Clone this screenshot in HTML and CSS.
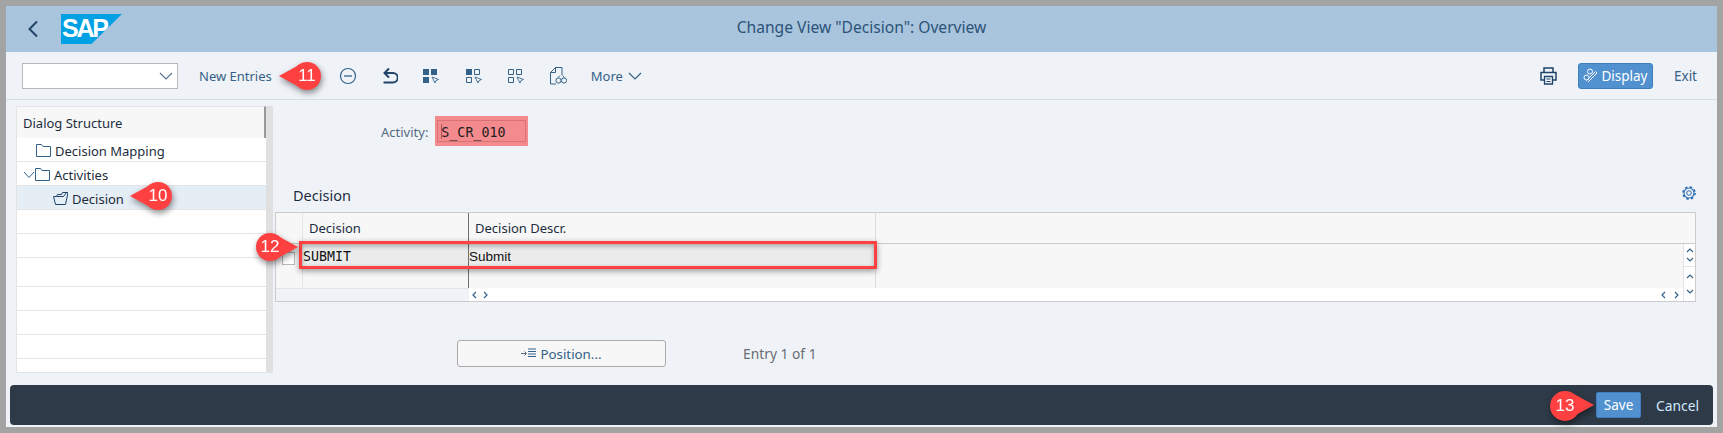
FILE: index.html
```html
<!DOCTYPE html>
<html lang="en">
<head>
    <meta charset="UTF-8" />
    <title>Change View "Decision": Overview</title>
    <link rel="stylesheet" href="styles.css">
</head>
<body>
<div class="window">
    <header class="shell">
        <svg class="back" width="12" height="18" viewBox="0 0 12 18"><path d="M10 1.5 2.500 9l7.500 7.500" fill="none" stroke="#1f4468" stroke-width="2"/></svg>
        <div class="logo"><span>SAP</span></div>
        <h1>Change View "Decision": Overview</h1>
    </header>

    <div class="toolbar">
        <div class="combo">
            <svg width="14" height="8" viewBox="0 0 14 8"><path d="M1 1l6 6 6-6" fill="none" stroke="#5b7690" stroke-width="1.200"/></svg>
        </div>
        <a class="tool new-entries">New Entries</a>
        <svg class="icon minus" width="18" height="18" viewBox="0 0 18 18"><circle cx="9" cy="9" r="7.500" fill="none" stroke="#346187" stroke-width="1.200"/><path d="M5 9h8" stroke="#346187" stroke-width="1.300"/></svg>
        <svg class="icon undo" width="16" height="17" viewBox="0 0 16 17"><path d="M7 1.500 2.500 6 7 10.500M2.500 6H11a4 4 0 0 1 0 9.500H1.500" fill="none" stroke="#1f4468" stroke-width="2"/></svg>
        <svg class="icon sel1" width="17" height="16" viewBox="0 0 17 16"><path d="M0 1h6v6H0zM8 1h6v6H8zM0 9h6v6H0z" fill="#346187"/><path d="M9 9l6.500 2.500-2.500 1-1 2.500z" fill="#fff" stroke="#346187" stroke-width=".9"/></svg>
        <svg class="icon sel2" width="17" height="16" viewBox="0 0 17 16"><path d="M0 1h6v6H0z" fill="#346187"/><path d="M8.500 1.500h5v5h-5zM.5 9.500h5v5h-5z" fill="none" stroke="#346187"/><path d="M9 9l6.500 2.500-2.500 1-1 2.500z" fill="#fff" stroke="#346187" stroke-width=".9"/></svg>
        <svg class="icon sel3" width="17" height="16" viewBox="0 0 17 16"><path d="M.5 1.500h5v5h-5zM8.500 1.500h5v5h-5zM.5 9.500h5v5h-5z" fill="none" stroke="#346187"/><path d="M9 9l6.500 2.500-2.500 1-1 2.500z" fill="#fff" stroke="#346187" stroke-width=".9"/></svg>
        <svg class="icon glasses" width="17" height="18" viewBox="0 0 17 18"><path d="M5.500.5H12V8M5.500.5.500 5.500V17H6M5.500.5v5h-5" fill="none" stroke="#346187"/><circle cx="8.500" cy="13.500" r="2.600" fill="none" stroke="#346187"/><circle cx="14" cy="13.500" r="2.600" fill="none" stroke="#346187"/><path d="M8 10.500l2-2M14.500 10.500l-2-2" stroke="#346187"/></svg>
        <a class="tool more">More</a>
        <svg class="more-arrow" width="14" height="8" viewBox="0 0 14 8"><path d="M1 1l6 6 6-6" fill="none" stroke="#346187" stroke-width="1.200"/></svg>

        <svg class="icon print" width="17" height="18" viewBox="0 0 17 18"><path d="M4 5V1h9v4M4 13H1V5.500h15V13h-3" fill="none" stroke="#1f4468" stroke-width="1.500"/><path d="M4.500 9.500h8V17h-8z" fill="#eff3f8" stroke="#1f4468" stroke-width="1.300"/><path d="M6.500 12h4M6.500 14.500h4" stroke="#1f4468"/></svg>
        <button class="btn-display">
            <svg width="15" height="15" viewBox="0 0 15 15"><circle cx="3.500" cy="9.500" r="2.500" fill="none" stroke="#fff"/><circle cx="7" cy="3.500" r="2.500" fill="none" stroke="#fff"/><path d="M5 14l9-9-1.500-1.500-9 9" fill="none" stroke="#fff"/></svg>
            Display
        </button>
        <a class="tool exit">Exit</a>
    </div>

    <div class="main">
        <aside class="tree">
            <div class="tree-list">
                <div class="tree-head">Dialog Structure</div>
                <div class="tree-row indent1">
                    <svg class="folder" width="15" height="13" viewBox="0 0 15 13"><path d="M.5 12.500V.5h5L7 2.500h7.500v10z" fill="#fff" stroke="#346187"/></svg>
                    Decision Mapping
                </div>
                <div class="tree-row">
                    <svg class="expander" width="12" height="8" viewBox="0 0 12 8"><path d="M1 1l5 5.500L11 1" fill="none" stroke="#346187"/></svg>
                    <svg class="folder" width="15" height="13" viewBox="0 0 15 13"><path d="M.5 12.500V.5h5L7 2.500h7.500v10z" fill="#fff" stroke="#346187"/></svg>
                    Activities
                </div>
                <div class="tree-row selected indent2">
                    <svg class="folder" width="15" height="13" viewBox="0 0 15 13"><path d="M2.500 12.500.5 4.500h3l1-2h4l1-2h5.500l-2.500 12zM3.500 4.500h7l3-4" fill="none" stroke="#1f4468"/></svg>
                    Decision
                </div>
                <div class="tree-row"></div>
                <div class="tree-row"></div>
                <div class="tree-row tall"></div>
                <div class="tree-row"></div>
                <div class="tree-row"></div>
                <div class="tree-row"></div>
                <div class="tree-row last"></div>
            </div>
            <div class="tree-scroll"></div>
        </aside>

        <section class="content">
            <div class="field">
                <label>Activity:</label>
                <div class="input-wrap"><div class="input">S_CR_010</div></div>
            </div>

            <div class="section-head">
                <h2>Decision</h2>
                <svg class="gear" width="14" height="14" viewBox="0 0 14 14"><circle cx="7" cy="7" r="5" fill="none" stroke="#2a6bb0" stroke-width="1.100"/><circle cx="7" cy="7" r="6" fill="none" stroke="#2a6bb0" stroke-width="1.600" stroke-dasharray="2.400 2.310"/><circle cx="7" cy="7" r="2.300" fill="none" stroke="#2a6bb0"/></svg>
            </div>

            <div class="table">
                <div class="t-row t-head">
                    <div class="c-sel"></div>
                    <div class="c-dec">Decision</div>
                    <div class="c-desc">Decision Descr.</div>
                    <div class="c-rest"></div>
                </div>
                <div class="t-body">
                    <div class="t-rows">
                        <div class="t-row t-data">
                            <div class="c-sel"><span class="check"></span></div>
                            <div class="c-dec mono">SUBMIT</div>
                            <div class="c-desc">Submit</div>
                            <div class="c-rest"></div>
                        </div>
                        <div class="t-row t-blank">
                            <div class="c-sel"></div>
                            <div class="c-dec"></div>
                            <div class="c-desc"></div>
                            <div class="c-rest"></div>
                        </div>
                        <div class="t-hscroll">
                            <div class="hs-fixed"></div>
                            <div class="hs-arrows">
                                <svg width="20" height="8" viewBox="0 0 20 8"><path d="M5 1 2 4l3 3M13 1l3 3-3 3" fill="none" stroke="#346187" stroke-width="1.200"/></svg>
                            </div>
                            <div class="hs-track"></div>
                            <div class="hs-arrows end">
                                <svg width="20" height="8" viewBox="0 0 20 8"><path d="M5 1 2 4l3 3M15 1l3 3-3 3" fill="none" stroke="#346187" stroke-width="1.200"/></svg>
                            </div>
                        </div>
                    </div>
                    <div class="t-vscroll">
                        <div class="vs-part">
                            <svg width="8" height="16" viewBox="0 0 8 16"><path d="M1 5l3-3 3 3M1 11l3 3 3-3" fill="none" stroke="#346187" stroke-width="1.200"/></svg>
                        </div>
                        <div class="vs-part low">
                            <svg width="8" height="22" viewBox="0 0 8 22"><path d="M1 5l3-3 3 3M1 17l3 3 3-3" fill="none" stroke="#346187" stroke-width="1.200"/></svg>
                        </div>
                    </div>
                </div>
            </div>

            <div class="pager">
                <button class="btn-position">
                    <svg width="15" height="11" viewBox="0 0 15 11"><path d="M0 5.500h5M3.500 3.500l2 2-2 2" fill="none" stroke="#556b82"/><path d="M7 1h8M7 3.500h8M7 6h8M7 8.500h8" stroke="#346187"/></svg>
                    Position...
                </button>
                <span class="entry">Entry 1 of 1</span>
            </div>
        </section>
    </div>

    <footer class="footer">
        <button class="btn-save">Save</button>
        <a class="cancel">Cancel</a>
    </footer>
</div>

<!-- annotations drawn over the screen -->
<div class="mark-box"></div>
<div class="callout c10"><span>10</span></div>
<div class="callout c11"><span>11</span></div>
<div class="callout c12 right"><span>12</span></div>
<div class="callout c13 right big"><span>13</span></div>
</body>
</html>
```

FILE: styles.css
```css
* {margin:0; padding:0; box-sizing: border-box;}
html, body {height: 100%;}
body {
    background-color: #a3a3a3;
    padding: 6px;
    position: relative;
    overflow: hidden;
    font-family: "Noto Sans", "Liberation Sans", sans-serif;
    font-size: 13px;
    color: #1d2d3e;
}
a {cursor: pointer;}
button {font-family: inherit; cursor: pointer;}
.window {
    height: 421px;
    background-color: #eff3f8;
    display: flex;
    flex-direction: column;
}

/* shell */
.shell {
    height: 46px;
    flex: none;
    background-color: #a9c4dd;
    display: flex;
    align-items: center;
    padding-left: 21px;
    position: relative;
}
.logo {
    width: 61px;
    height: 30px;
    margin-left: 22px;
    background-color: #00a1e4;
    clip-path: polygon(0 0, 100% 0, 50% 100%, 0 100%);
}
.logo span {
    display: block;
    padding-left: 1px;
    font: bold 25px/29px "Liberation Sans", sans-serif;
    letter-spacing: -2.200px;
    color: #fff;
}
.shell h1 {
    position: absolute;
    left: 0;
    right: 0;
    top: 11px;
    text-align: center;
    font-size: 15.600px;
    line-height: 20px;
    font-weight: 400;
    color: #2c5378;
}

/* toolbar */
.toolbar {
    height: 48px;
    flex: none;
    border-bottom: 1px solid #d5dfea;
    display: flex;
    align-items: center;
    padding-left: 16px;
}
.combo {
    width: 156px;
    height: 26px;
    background-color: #fff;
    border: 1px solid #b8b8b8;
    display: flex;
    align-items: center;
    justify-content: flex-end;
    padding-right: 4px;
}
.tool {color: #346187; font-size: 13px;}
.new-entries {margin-left: 21px;}
.icon {flex: none;}
.minus {margin-left: 67px;}
.undo {margin-left: 25px;}
.sel1 {margin-left: 25px;}
.sel2 {margin-left: 26px;}
.sel3 {margin-left: 25px;}
.glasses {margin-left: 25px;}
.more {margin-left: 24px;}
.more-arrow {margin-left: 5px;}
.print {margin-left: auto;}
.btn-display {
    width: 75px;
    height: 26px;
    margin-left: 21px;
    background-color: #5191cf;
    border: 1px solid #3f7fbf;
    border-radius: 3px;
    color: #fff;
    font-size: 13.500px;
    display: flex;
    align-items: center;
    justify-content: center;
    gap: 3px;
}
.exit {margin-left: 21px; margin-right: 20px; font-size: 13.500px;}

/* main */
.main {
    flex: 1;
    display: flex;
    min-height: 0;
}
.tree {
    width: 257px;
    height: 267px;
    flex: none;
    margin: 6px 0 0 10px;
    display: flex;
}
.tree-list {
    flex: 1;
    background-color: #fff;
    border-left: 1px solid #e4e4e4;
    border-bottom: 1px solid #e4e4e4;
}
.tree-scroll {width: 7px; background-color: #e0e0e0;}
.tree-head {
    height: 32px;
    background-color: #f7f7f7;
    border-top: 1px solid #e4e4e4;
    border-right: 2px solid #999;
    padding-left: 6px;
    line-height: 33px;
    font-size: 13px;
}
.tree-row {
    height: 24px;
    border-bottom: 1px solid #e4e4e4;
    display: flex;
    align-items: center;
    gap: 4px;
    padding: 2px 0 0 6px;
    font-size: 13px;
}
.tree-row.tall {height: 29px;}
.tree-row.last {height: 13px; border-bottom: 0;}
.indent1 {padding-left: 19px;}
.indent2 {padding-left: 36px;}
.expander {margin-right: -4px;}
.selected {background-color: #e5edf5;}

/* right part */
.content {
    flex: 1;
    min-width: 0;
    padding: 16px 21px 0 2px;
}
.field {
    height: 30px;
    display: flex;
    align-items: center;
    padding-left: 106px;
}
.field label {color: #556b82; font-size: 13px; margin-right: 7px; padding-top: 2px;}
.input-wrap {
    width: 93px;
    height: 30px;
    padding: 4px 2px;
    background-color: #f38a8d;
}
.input {
    height: 22px;
    border: 1px solid #d87274;
    padding-left: 3px;
    font: 13.300px/24px "DejaVu Sans Mono", monospace;
    color: #1d1d1d;
}
.input::before {
    content: "";
    display: inline-block;
    width: 1px;
    height: 15px;
    margin-right: -1px;
    vertical-align: -2px;
    background-color: #a85a5c;
}
.section-head {
    height: 36px;
    margin-top: 30px;
    padding: 0 0 0 18px;
    display: flex;
    align-items: center;
    justify-content: space-between;
}
.section-head h2 {font-size: 14.500px; font-weight: 400; padding-top: 2px;}
.gear {margin-bottom: 2px;}

/* table */
.table {
    height: 90px;
    border: 1px solid #ccc;
    background-color: #f7f7f7;
}
.t-row {display: flex;}
.t-head {height: 31px; border-bottom: 1px solid #ccc;}
.c-sel {width: 27px; flex: none; border-right: 1px solid #e4e4e4;}
.c-dec {width: 166px; flex: none; border-right: 1px solid #6f6f6f;}
.c-desc {width: 407px; flex: none; border-right: 1px solid #dcdcdc;}
.c-rest {flex: 1;}
.t-head .c-dec, .t-head .c-desc {padding-left: 6px; line-height: 30px; font-size: 13px;}
.t-body {display: flex; height: 57px;}
.t-rows {flex: 1; min-width: 0; display: flex; flex-direction: column;}
.t-data {height: 22px; align-items: stretch;}
.t-data .c-dec, .t-data .c-desc {background-color: #ebebeb; padding-top: 2px;}
.t-data .c-desc {font: 13.500px/22px "Liberation Sans", sans-serif; color: #111; border-right-color: #ebebeb;}
.t-data .c-sel {display: flex; align-items: flex-end; padding-left: 6px;}
.check {
    width: 13px;
    height: 13px;
    border: 1px solid #b8b8b8;
    background-color: #fff;
    display: block;
    margin-bottom: 1px;
}
.mono {font: 13.300px/22px "DejaVu Sans Mono", monospace; color: #111;}
.t-blank {height: 22px;}
.t-hscroll {
    height: 13px;
    display: flex;
    background-color: #fff;
}
.hs-fixed {width: 193px; background-color: #eff3f8; border-top: 1px solid #e4e4e4;}
.hs-arrows {width: 24px; display: flex; align-items: center; justify-content: center;}
.hs-arrows.end {width: 26px;}
.hs-track {flex: 1;}
.t-vscroll {
    width: 12px;
    flex: none;
    border-left: 1px solid #e4e4e4;
    background-color: #fff;
    display: flex;
    flex-direction: column;
}
.vs-part {height: 23px; display: flex; align-items: center; justify-content: center; border-bottom: 1px solid #e4e4e4;}
.vs-part.low {flex: 1; border-bottom: 0;}

.pager {
    display: flex;
    align-items: center;
    margin-top: 38px;
    padding-left: 182px;
}
.btn-position {
    width: 209px;
    height: 27px;
    background-color: #f7f7f7;
    border: 1px solid #aaa;
    border-radius: 3px;
    color: #346187;
    font-size: 13.300px;
    display: flex;
    align-items: center;
    justify-content: center;
    gap: 4px;
}
.entry {margin-left: 77px; color: #6a6d70; font-size: 13.800px;}

/* footer */
.footer {
    height: 40px;
    flex: none;
    margin: 0 4px 2px 4px;
    background-color: #2e3a47;
    border-radius: 4px;
    display: flex;
    align-items: center;
    justify-content: flex-end;
    padding-right: 14px;
}
.btn-save {
    width: 45px;
    height: 26px;
    background-color: #5191cf;
    border: 1px solid #3f7fbf;
    border-radius: 2px;
    color: #fff;
    font-size: 13.500px;
}
.cancel {margin-left: 15px; color: #d1e8ff; font-size: 13.800px;}

/* annotations */
.mark-box {
    position: absolute;
    left: 299px;
    top: 241px;
    width: 578px;
    height: 28px;
    border: 3px solid #ff4040;
    box-shadow: 0 2px 6px rgba(0,0,0,.4), inset 0 2px 5px rgba(0,0,0,.3);
}
.callout {
    position: absolute;
    width: 28px;
    height: 28px;
    background-color: #ff4040;
    border-radius: 50%;
    color: #fff;
    font: 17px/28px "Liberation Sans", sans-serif;
    text-align: center;
    filter: drop-shadow(1px 3px 3px rgba(0,0,0,.45));
}
.callout::before {
    content: "";
    position: absolute;
    top: 3px;
    left: -14px;
    border-style: solid;
    border-width: 11px 20px 11px 0;
    border-color: transparent #ff4040 transparent transparent;
}
.callout span {position: relative;}
.callout.right::before {
    left: auto;
    right: -14px;
    border-width: 11px 0 11px 20px;
    border-color: transparent transparent transparent #ff4040;
}
.callout.big {width: 30px; height: 30px; line-height: 30px;}
.c10 {left: 144px; top: 182px;}
.c11 {left: 293px; top: 62px;}
.c12 {left: 256px; top: 233px;}
.c13 {left: 1550px; top: 391px;}
```
